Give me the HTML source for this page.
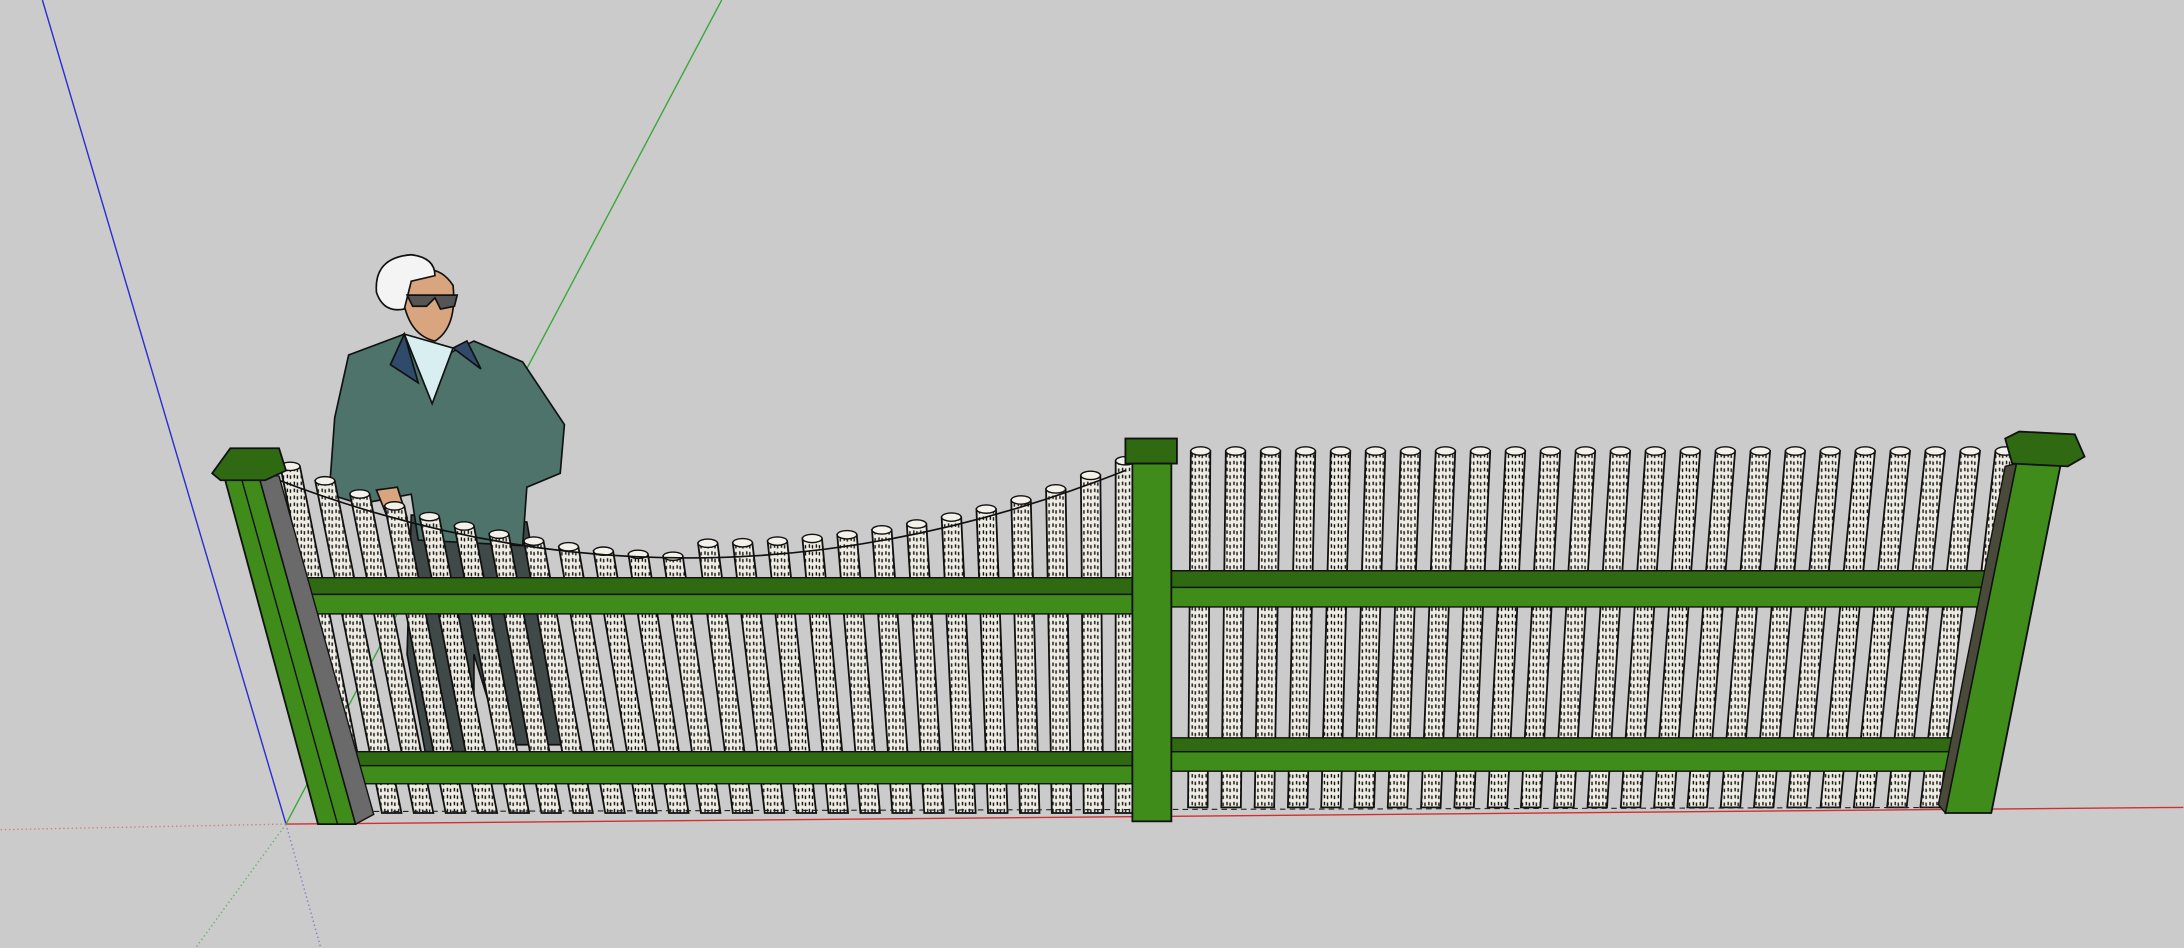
<!DOCTYPE html>
<html><head><meta charset="utf-8"><style>
html,body{margin:0;padding:0;background:#cbcbcb;overflow:hidden}
svg{display:block}
</style></head><body>
<svg id="s" width="2184" height="948" viewBox="0 0 1568 681" xmlns="http://www.w3.org/2000/svg">
<defs>
<pattern id="h" width="5" height="5" patternUnits="userSpaceOnUse">
<rect width="5" height="5" fill="#efece4"/>
<path d="M1 1 L1 3.5 M3.2 1.5 L3.2 4" stroke="#111" stroke-width="1"/>
</pattern>
</defs>
<rect width="1568" height="681" fill="#cbcbcb"/>
<line x1="30" y1="0" x2="205" y2="592" stroke="#2b2bd0" stroke-width="1"/>
<line x1="518" y1="0" x2="205" y2="592" stroke="#3aa83a" stroke-width="1"/>
<line x1="205" y1="592" x2="1568" y2="580" stroke="#d03030" stroke-width="1"/>
<line x1="0" y1="596" x2="205" y2="592" stroke="#d08080" stroke-width="1" stroke-dasharray="1,2"/>
<line x1="205" y1="592" x2="140" y2="681" stroke="#6ab06a" stroke-width="1" stroke-dasharray="1,2"/>
<line x1="205" y1="592" x2="230" y2="681" stroke="#8080c0" stroke-width="1" stroke-dasharray="1,2"/>
<g stroke="#111" stroke-width="1.2">
<path d="M295 370 L292 470 L305 540 L340 540 L340 470 L360 535 L405 535 L395 470 L378 375 Z" fill="#3f4a48"/>
<path d="M290 240 L250 255 L240 300 L236 355 L258 362 L295 355 L300 388 L375 392 L378 350 L402 340 L405 305 L375 260 L340 245 L320 255 Z" fill="#4d736a"/>
<path d="M290 240 L310 290 L325 250 Z" fill="#d8eef0"/>
<path d="M290 240 L280 262 L300 275 Z M325 250 L345 265 L335 245 Z" fill="#2f4a6a"/>
<path d="M288 205 Q290 240 312 245 Q328 235 325 205 Q315 190 300 195 Z" fill="#d9a57e"/>
<path d="M270 210 Q268 185 295 183 Q312 185 312 198 L295 202 L290 222 Q275 225 270 210 Z" fill="#f4f4f4"/>
<path d="M292 212 L328 212 L326 220 L316 222 L312 214 L306 220 L296 220 Z" fill="#555"/>
<path d="M270 352 L285 350 L292 372 L278 372 Z" fill="#d9a57e"/>
</g>
<g id="fence"></g>
</svg>
<script>
var NS="http://www.w3.org/2000/svg";
var F=document.getElementById('fence');
function el(t,a,p){var e=document.createElementNS(NS,t);for(var k in a)e.setAttribute(k,a[k]);(p||F).appendChild(e);return e;}
var G="#3f8c1a",GD="#2f6a12";
var n=25;
for(var i=0;i<n;i++){
 var t=i/(n-1);
 var xb=258+t*(808-258);
 var yt= 335 + 260*t*(1-t)*(t<0.5?1:0.85) - (t>0.9?(t-0.9)*40:0);
 var xt=xb-(1-t)*50;
 var w=14;
 el('path',{d:'M'+(xt-w/2)+' '+yt+' L'+(xt+w/2)+' '+yt+' L'+(xb+w/2)+' 584 L'+(xb-w/2)+' 584 Z',fill:'url(#h)',stroke:'#111','stroke-width':1.3});
 el('ellipse',{cx:xt,cy:yt,rx:w/2,ry:3,fill:'#f4f1ea',stroke:'#111','stroke-width':1});
}
for(var i=0;i<24;i++){
 var t=i/23;
 var xb=860+t*(1410-860);
 var xt=862+t*(1440-862);
 var yt=324;
 var w=14;
 el('path',{d:'M'+(xt-w/2)+' '+yt+' L'+(xt+w/2)+' '+yt+' L'+(xb+w/2)+' 580 L'+(xb-w/2)+' 580 Z',fill:'url(#h)',stroke:'#111','stroke-width':1.3});
 el('ellipse',{cx:xt,cy:yt,rx:w/2,ry:3,fill:'#f4f1ea',stroke:'#111','stroke-width':1});
}
el('path',{d:'M200 345 Q500 460 808 338',fill:'none',stroke:'#111','stroke-width':1.2});
el('line',{x1:240,y1:583,x2:1410,y2:580,stroke:'#222','stroke-width':0.8,'stroke-dasharray':'4,3'});
function rail(x1,x2,y,h,top){
 el('path',{d:'M'+x1+' '+(y-top)+' L'+x2+' '+(y-top)+' L'+x2+' '+y+' L'+x1+' '+y+' Z',fill:GD,stroke:'#111','stroke-width':1});
 el('rect',{x:x1,y:y,width:x2-x1,height:h,fill:G,stroke:'#111','stroke-width':1});
}
rail(208,815,427,14,12);
rail(240,815,550,13,10);
rail(838,1440,422,14,12);
rail(838,1410,540,14,10);
el('path',{d:'M160 340 L185 340 L255 592 L228 592 Z',fill:G,stroke:'#111','stroke-width':1.3});
el('path',{d:'M185 340 L200 342 L268 585 L255 592 Z',fill:'#6a6a6a',stroke:'#111','stroke-width':1});
el('line',{x1:172,y1:340,x2:242,y2:592,stroke:'#111','stroke-width':1});
el('path',{d:'M152 340 L165 322 L200 322 L205 338 L190 345 L158 345 Z',fill:GD,stroke:'#111','stroke-width':1.3});
el('rect',{x:808,y:315,width:37,height:18,fill:GD,stroke:'#111','stroke-width':1.3});
el('rect',{x:813,y:333,width:28,height:257,fill:G,stroke:'#111','stroke-width':1.3});
el('path',{d:'M1448 333 L1480 333 L1430 584 L1397 584 Z',fill:G,stroke:'#111','stroke-width':1.3});
el('path',{d:'M1448 333 L1440 335 L1392 578 L1397 584 Z',fill:'#4a4a3a',stroke:'#111','stroke-width':1});
el('path',{d:'M1440 315 L1450 310 L1490 312 L1497 328 L1485 335 L1445 333 Z',fill:GD,stroke:'#111','stroke-width':1.3});
</script>
</body></html>
